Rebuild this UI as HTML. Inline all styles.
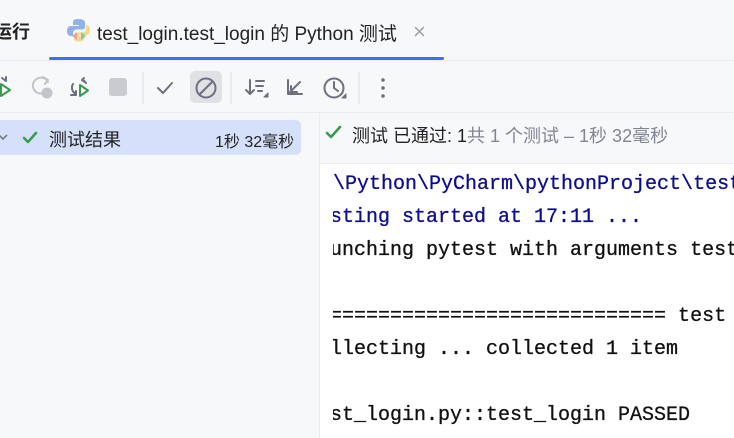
<!DOCTYPE html>
<html><head><meta charset="utf-8"><style>
body{margin:0;width:734px;height:438px;overflow:hidden;background:#f7f8fa;font-family:"Liberation Sans","Noto Sans CJK SC",sans-serif;position:relative}
.a{position:absolute}
.con{position:absolute;left:320px;top:164px;width:414px;height:274px;background:#fff}
.clip{position:absolute;left:13px;top:0;width:401px;height:274px;overflow:hidden}
.mono{font-family:"Liberation Mono","DejaVu Sans Mono",monospace;font-size:20px;white-space:pre;position:absolute;left:-27px;-webkit-text-stroke:0.3px currentColor}
</style></head><body>
<div class="a" style="left:-6px;top:18px;font-size:18px;font-weight:bold;color:#222">运行</div>
<svg class="a" style="left:66px;top:17px" width="26" height="26" viewBox="0 0 26 26">
<path d="M12 2c-4 0-5 1.5-5 3.5V8h6v1H5c-2.5 0-4 2-4 5s1.5 5 4 5h2v-3c0-2 1.5-3.5 3.5-3.5H16c2 0 3-1 3-3V5.5C19 3.5 17 2 12 2z" fill="#8fb3e8"/>
<path d="M20 9v3c0 2-1.5 3.5-3.5 3.5H11c-2 0-3 1-3 3v3c0 2 2 3 5 3s5-1 5-3v-2.5h-5v-1h7c2.5 0 4-2 4-5s-1.5-5-4-5z" fill="#f3d98a"/>
<path d="M11 15l-5 4 5 4z" fill="#e8a0a0"/><path d="M15 15l5 4-5 4z" fill="#8cc99a"/>
</svg>
<div class="a" style="left:97px;top:19px;font-size:19px;color:#222;white-space:nowrap">test_login.test_login 的 Python 测试</div>
<div class="a" style="left:413px;top:19px;font-size:22px;color:#a0a3a8">×</div>
<div class="a" style="left:49px;top:57px;width:395px;height:3px;background:#3574f0;border-radius:2px"></div>
<div class="a" style="left:0;top:60px;width:734px;height:1px;background:#ebecf0"></div>
<svg class="a" style="left:0;top:68px" width="400" height="42" viewBox="0 68 400 42">
<g fill="none" stroke-width="2" stroke-linecap="round" stroke-linejoin="round">
<path d="M2 78l4 3v-4" stroke="#6c707e"/><path d="M1 84v12l9-6z" stroke="#3b9a4e"/>
<path d="M48 82a8 8 0 1 0-4 11" stroke="#c3c5ca"/><path d="M43 77l5 3-3 4" stroke="#c3c5ca"/>
<circle cx="47" cy="93" r="5.5" fill="#c3c5ca" stroke="none"/>
<path d="M73 84a7 7 0 0 0 3 10M71 95h5v-4" stroke="#6c707e"/><path d="M82 80a7 7 0 0 1 4 3M84 78l-2 2 3 2" stroke="#6c707e"/>
<path d="M80 85v11l8-5.5z" stroke="#3b9a4e"/>
<rect x="109" y="78" width="18" height="18" rx="3" fill="#c9cbcf" stroke="none"/>
<path d="M143 73v30" stroke="#e3e5e8" stroke-width="1.5"/>
<path d="M158 88l5 5 9-10" stroke="#6c707e"/>
<rect x="190" y="71" width="32" height="32" rx="5" fill="#dfe1e5" stroke="none"/>
<circle cx="206" cy="88" r="9.5" stroke="#6c707e"/><path d="M199.5 94.5l13-13" stroke="#6c707e"/>
<path d="M231 73v30" stroke="#e3e5e8" stroke-width="1.5"/>
<path d="M250 80v14M246 90l4 4 4-4M256 81h8M256 86h7M258 91h4" stroke="#6c707e"/><path d="M268 97h-4l4-4z" fill="#6c707e" stroke="#6c707e" stroke-width="1"/>
<path d="M288 80v14h14M290 92l10-10M291 86v6h6" stroke="#6c707e"/>
<circle cx="334" cy="88" r="9.5" stroke="#6c707e"/><path d="M334 82v6l4 3" stroke="#6c707e"/><path d="M346 98h-4l4-4z" fill="#6c707e" stroke="#6c707e" stroke-width="1"/>
<path d="M359 73v30" stroke="#e3e5e8" stroke-width="1.5"/>
</g>
<circle cx="383" cy="80" r="1.8" fill="#6c707e"/><circle cx="383" cy="88" r="1.8" fill="#6c707e"/><circle cx="383" cy="96" r="1.8" fill="#6c707e"/>
</svg>
<div class="a" style="left:0;top:112px;width:734px;height:1px;background:#ebecf0"></div>
<div class="a" style="left:319px;top:113px;width:1px;height:325px;background:#ebecf0"></div>
<div class="a" style="left:0;top:120px;width:301px;height:35px;background:#d5e1fb;border-radius:0 5px 5px 0"></div>
<svg class="a" style="left:0;top:128px" width="50" height="20"><path d="M-1 7l4 4 4-4" fill="none" stroke="#6c707e" stroke-width="1.5"/><path d="M24 10l4 4 8-9" fill="none" stroke="#3b9a4e" stroke-width="2.6" stroke-linecap="round" stroke-linejoin="round"/></svg>
<div class="a" style="left:49px;top:126px;font-size:18px;color:#222">测试结果</div>
<div class="a" style="left:215px;top:128px;font-size:16px;color:#222;white-space:nowrap">1秒 32毫秒</div>
<svg class="a" style="left:324px;top:123px" width="22" height="20"><path d="M3 10l4 4 9-10" fill="none" stroke="#3b9a4e" stroke-width="2.6" stroke-linecap="round" stroke-linejoin="round"/></svg>
<div class="a" style="left:352px;top:122px;font-size:18px;color:#222;white-space:nowrap">测试 已通过: 1<span style="color:#818594">共 1 个测试 – 1秒 32毫秒</span></div>
<div class="a" style="left:320px;top:163px;width:414px;height:1px;background:#ebecf0"></div>
<div class="con"><div class="clip">
<div class="mono" style="top:9px;left:-24px;color:#0c0e8f">D:\Python\PyCharm\pythonProject\test</div>
<div class="mono" style="top:42px;color:#0c0e8f">Testing started at 17:11 ...</div>
<div class="mono" style="top:75px;color:#111">Launching pytest with arguments test</div>
<div class="mono" style="top:141px;color:#111">============================== test s</div>
<div class="mono" style="top:174px;color:#111">Collecting ... collected 1 item</div>
<div class="mono" style="top:240px;color:#111">test_login.py::test_login PASSED</div>
</div></div>
</body></html>
